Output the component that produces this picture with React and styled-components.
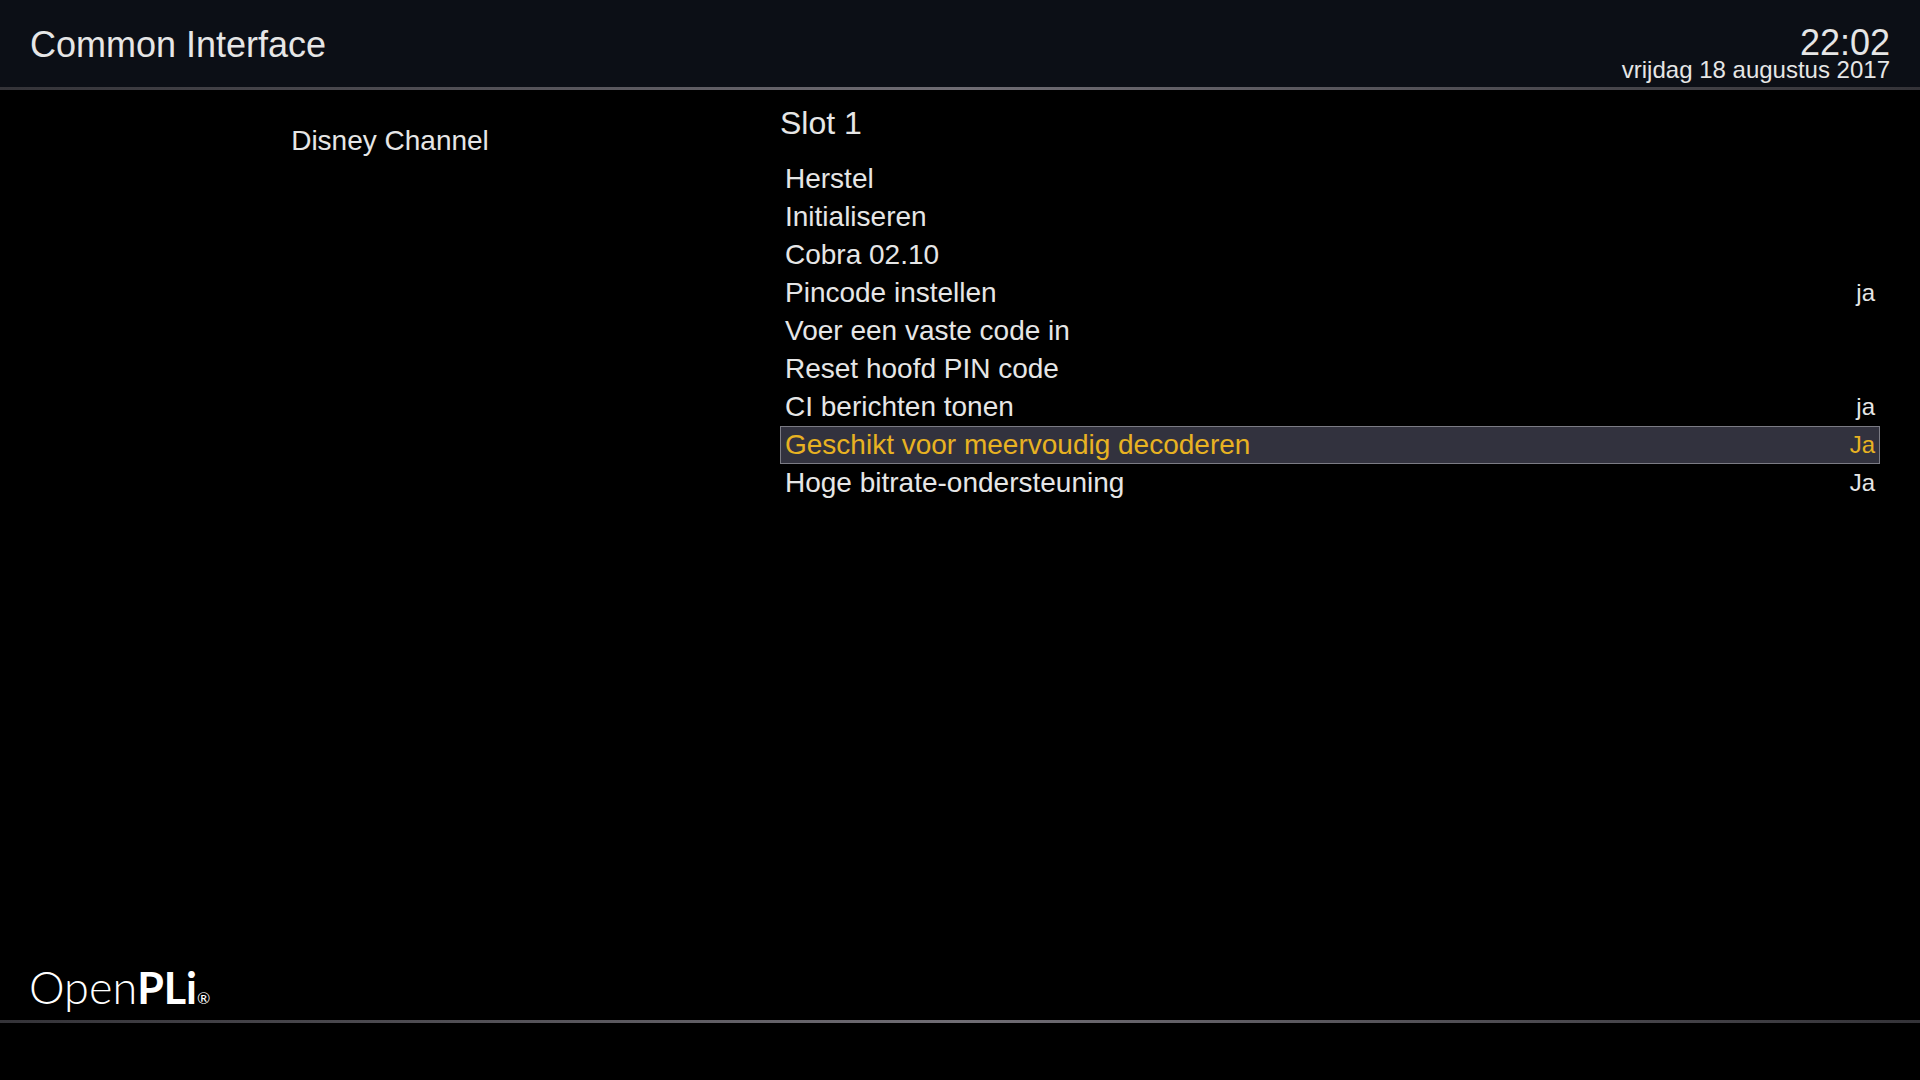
import React, { useState } from 'react'
import styled, { createGlobalStyle } from 'styled-components'

const MENU_ITEMS = [
   { id: 'reset', label: 'Herstel' },
   { id: 'init', label: 'Initialiseren' },
   { id: 'module', label: 'Cobra 02.10' },
   { id: 'pin', label: 'Pincode instellen', value: 'ja' },
   { id: 'static-pin', label: 'Voer een vaste code in' },
   { id: 'reset-pin', label: 'Reset hoofd PIN code' },
   { id: 'messages', label: 'CI berichten tonen', value: 'ja' },
   { id: 'multi', label: 'Geschikt voor meervoudig decoderen', value: 'Ja' },
   { id: 'bitrate', label: 'Hoge bitrate-ondersteuning', value: 'Ja' },
]

function App() {
   const [selected, setSelected] = useState('multi')

   return (
      <Screen>
         <GlobalStyle />
         <Header>
            <Title>Common Interface</Title>
            <Clock>
               <Time>22:02</Time>
               <Day>vrijdag 18 augustus 2017</Day>
            </Clock>
         </Header>
         <Divider />
         <Content>
            <Channel>Disney Channel</Channel>
            <Slot>
               <SlotTitle>Slot 1</SlotTitle>
               <Menu>
                  {MENU_ITEMS.map(({ id, label, value }) => (
                     <li key={id}>
                        <MenuRow
                           type="button"
                           $active={id === selected}
                           onClick={() => setSelected(id)}
                        >
                           <span>{label}</span>
                           {value && <Value>{value}</Value>}
                        </MenuRow>
                     </li>
                  ))}
               </Menu>
            </Slot>
         </Content>
         <Logo>
            <span>Open</span>
            <LogoBold>PLi</LogoBold>
            <Registered>®</Registered>
         </Logo>
         <Divider />
         <Footer />
      </Screen>
   )
}

export default App

const GlobalStyle = createGlobalStyle`
   * {
      box-sizing: border-box;
   }
   body {
      margin: 0;
      background-color: #000;
      color: #e6e6e6;
      font-family: 'Liberation Sans', Arial, sans-serif;
   }
`

const Screen = styled.div`
   display: flex;
   flex-direction: column;
   min-height: 100vh;
`

const Header = styled.header`
   display: flex;
   justify-content: space-between;
   align-items: flex-end;
   padding: 25px 30px 5px;
   background-color: #0c0f16;
`

const Title = styled.h1`
   margin: 0;
   padding-bottom: 17px;
   font-size: 36px;
   font-weight: 400;
   line-height: 40px;
`

const Clock = styled.div`
   display: flex;
   flex-direction: column;
   align-items: flex-end;
`

const Time = styled.time`
   font-size: 36px;
   line-height: 30px;
`

const Day = styled.span`
   font-size: 24px;
   line-height: 24px;
`

const Divider = styled.div`
   height: 3px;
   background: linear-gradient(to right, #343338, #706d74 50%, #343338);
`

const Content = styled.main`
   display: grid;
   grid-template-columns: 720fr 1100fr;
   column-gap: 30px;
   flex: 1;
   padding: 13px 40px 0 30px;
`

const Channel = styled.p`
   margin: 0;
   padding-top: 19px;
   font-size: 28px;
   line-height: 38px;
   text-align: center;
`

const Slot = styled.section`
   min-width: 0;
`

const SlotTitle = styled.h2`
   margin: 0 0 17px;
   font-size: 32px;
   font-weight: 400;
   line-height: 40px;
`

const Menu = styled.ul`
   margin: 0;
   padding: 0;
   list-style: none;
`

const MenuRow = styled.button`
   display: flex;
   justify-content: space-between;
   align-items: center;
   width: 100%;
   height: 38px;
   padding: 0 4px;
   border: 1px solid ${({ $active }) => ($active ? '#7b7b84' : 'transparent')};
   background-color: ${({ $active }) => ($active ? '#32323e' : 'transparent')};
   color: ${({ $active }) => ($active ? '#e8b222' : 'inherit')};
   font-family: inherit;
   font-size: 28px;
   line-height: 36px;
   text-align: left;
   cursor: pointer;
`

const Value = styled.span`
   font-size: 24px;
`

const Logo = styled.div`
   display: flex;
   align-items: baseline;
   padding: 0 29px;
   color: #fff;
   font-family: Lato, sans-serif;
   font-size: 45px;
   font-weight: 300;
   line-height: 64px;
`

const LogoBold = styled.span`
   font-size: 43px;
   font-weight: 700;
`

const Registered = styled.span`
   font-size: 16px;
   font-weight: 400;
   line-height: 16px;
`

const Footer = styled.footer`
   height: 57px;
`
